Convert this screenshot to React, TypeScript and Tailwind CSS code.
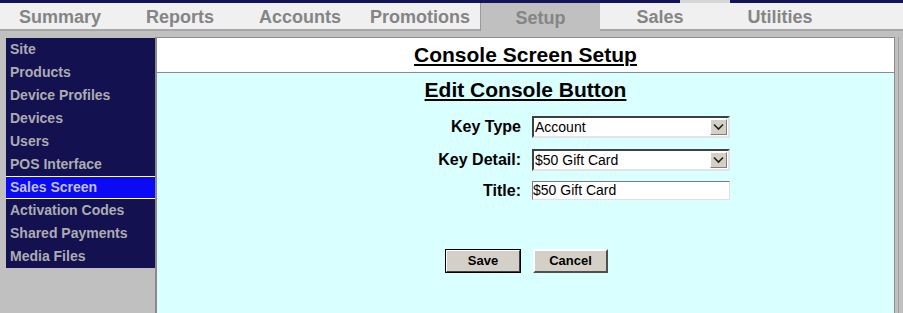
import React from 'react';

const tabs = ['Summary', 'Reports', 'Accounts', 'Promotions', 'Setup', 'Sales', 'Utilities'];

const menu = [
  'Site',
  'Products',
  'Device Profiles',
  'Devices',
  'Users',
  'POS Interface',
  'Sales Screen',
  'Activation Codes',
  'Shared Payments',
  'Media Files',
];

function SelectBox({ value }: { value: string }) {
  return (
    <div className="flex h-[22px] w-[198px] items-stretch border-2 border-t-[#404040] border-l-[#404040] border-b-[#e4e4e4] border-r-[#e4e4e4] bg-white">
      <div className="flex flex-1 items-center pl-[1px] text-[14px] text-black">{value}</div>
      <div className="m-[1px] flex w-[17px] items-center justify-center border border-t-white border-l-white border-b-[#808080] border-r-[#808080] bg-[#d4d0c8]">
        <svg width="11" height="8" viewBox="0 0 11 8">
          <path d="M1 1.5 L5.5 6 L10 1.5" fill="none" stroke="#202020" strokeWidth="1.6" />
        </svg>
      </div>
    </div>
  );
}

export default function App() {
  return (
    <div className="h-[313px] w-[903px] overflow-hidden bg-[#c0c0c0] font-['Liberation_Sans',Arial,sans-serif]">
      {/* top strip */}
      <div className="flex h-[3px] bg-[#15145a]">
        <div className="w-[680px]" />
        <div className="w-[50px] bg-[#d6d6d6]" />
      </div>

      {/* tabs */}
      <div className="flex h-[28px]">
        {tabs.map((t) => (
          <div
            key={t}
            className={
              t === 'Setup'
                ? 'flex w-[120px] items-center justify-center border-l border-[#9a9a9a] bg-[#c0c0c0] pt-[2px] text-[18px] font-bold text-[#858585]'
                : 'flex w-[120px] items-center justify-center border-b-2 border-[#a8a8a8] bg-[#f0f0f0] pt-[2px] text-[18px] font-bold text-[#858585]'
            }
          >
            {t}
          </div>
        ))}
        <div className="flex-1 border-b-2 border-[#a8a8a8] bg-[#f0f0f0]" />
      </div>

      <div className="flex h-[282px]">
        {/* sidebar */}
        <div className="w-[155px] pl-[6px] pt-[7px]">
          <div className="w-[149px] bg-[#131150]">
            {menu.map((m) => (
              <div
                key={m}
                className={
                  m === 'Sales Screen'
                    ? 'h-[23px] border-y border-white bg-[#0a0af5] pl-[4px] text-[14px] font-bold leading-[21px] text-[#c0c0d0]'
                    : 'h-[23px] pl-[4px] text-[14px] font-bold leading-[23px] text-[#acacb0]'
                }
              >
                {m}
              </div>
            ))}
          </div>
        </div>

        {/* main panel */}
        <div className="mt-[6px] flex w-[740px] flex-col border-t border-r border-l-2 border-t-[#8c8c8c] border-r-[#8c8c8c] border-l-[#8a8a8a]">
          <div className="flex h-[35px] items-center justify-center border-b border-[#8c8c8c] bg-white text-[21px] font-bold text-black underline decoration-2 underline-offset-2">
            Console Screen Setup
          </div>
          <div className="flex-1 bg-[#d9ffff]">
            <div className="pt-[5px] text-center text-[21px] font-bold leading-[24px] text-black underline decoration-2 underline-offset-2">
              Edit Console Button
            </div>

            <div className="ml-[224px] mt-[14px] grid grid-cols-[140px_198px] gap-x-[11px]">
              <div className="flex h-[22px] items-center justify-end text-[16px] font-bold text-black">Key Type</div>
              <SelectBox value="Account" />

              <div className="mt-[11px] flex h-[22px] items-center justify-end text-[16px] font-bold text-black">
                Key Detail:
              </div>
              <div className="mt-[11px]">
                <SelectBox value="$50 Gift Card" />
              </div>

              <div className="mt-[10px] flex h-[19px] items-center justify-end text-[16px] font-bold text-black">Title:</div>
              <div className="mt-[10px] flex h-[19px] w-[198px] items-center border border-t-[#7a7a7a] border-l-[#7a7a7a] border-b-[#e0e0e0] border-r-[#e0e0e0] bg-white text-[14px] text-black">
                $50 Gift Card
              </div>
            </div>

            <div className="ml-[288px] mt-[49px] flex gap-[12px]">
              <button className="h-[24px] w-[76px] border border-black bg-[#d4d0c8] p-0">
                <div className="flex h-full w-full items-center justify-center border border-t-white border-l-white border-b-[#404040] border-r-[#404040] text-[13px] font-bold text-black">
                  Save
                </div>
              </button>
              <button className="flex h-[24px] w-[75px] items-center justify-center border-2 border-t-white border-l-white border-b-[#505050] border-r-[#505050] bg-[#d4d0c8] text-[13px] font-bold text-black">
                Cancel
              </button>
            </div>
          </div>
        </div>

        <div className="flex-1 pl-[3px] pt-[6px]">
          <div className="h-full w-[1px] bg-[#a0a0a0]" />
        </div>
      </div>
    </div>
  );
}
